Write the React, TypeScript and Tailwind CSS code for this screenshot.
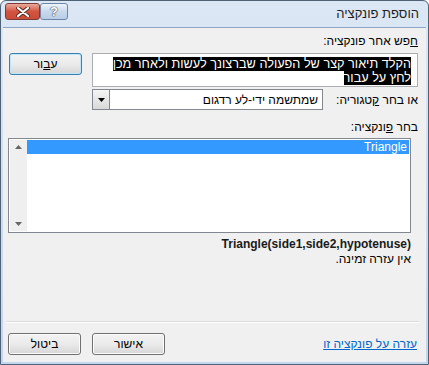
import React from 'react';

const font = { fontFamily: '"Liberation Sans", "DejaVu Sans", sans-serif' };

// Vista-style push button
const PushButton: React.FC<{ children: React.ReactNode; focused?: boolean }> = ({ children, focused }) => (
  <div
    className={`w-[73px] h-[22px] rounded-[3px] border flex items-center justify-center text-[12px] text-black bg-gradient-to-b from-[#f2f2f2] via-[#ebebeb] to-[#d6d6d6] ${
      focused ? 'border-[#3c7fb1] shadow-[inset_0_0_0_1px_#bfe6fb]' : 'border-[#707070] shadow-[inset_0_0_0_1px_#fcfcfc]'
    }`}
  >
    {children}
  </div>
);

const Arrow: React.FC<{ up?: boolean; color?: string }> = ({ up, color = '#555' }) => (
  <svg width="7" height="4" viewBox="0 0 7 4">
    {up ? <path d="M0 4 L3.5 0 L7 4 Z" fill={color} /> : <path d="M0 0 L7 0 L3.5 4 Z" fill={color} />}
  </svg>
);

export default function App() {
  return (
    <div className="w-[429px] h-[365px] bg-white" style={font}>
      <div className="w-full h-full rounded-t-[6px] border border-[#4f6276] bg-gradient-to-b from-[#dce7f5] to-[#c4d6ed] flex flex-col">
        {/* title bar */}
        <div className="h-[26px] flex items-center justify-between pl-[4px] pr-[9px]" dir="ltr">
          <div className="flex self-start mt-[2px]">
            <div className="w-[35px] h-[17px] rounded-[3px] border border-[#7a3b37] bg-gradient-to-b from-[#e9a99b] via-[#d2533f] to-[#c84e39] flex items-center justify-center">
              <svg width="14" height="10" viewBox="0 0 14 10">
                <path d="M2 1 L12 9 M12 1 L2 9" stroke="#5b2a24" strokeWidth="4" strokeLinecap="round" />
                <path d="M2 1 L12 9 M12 1 L2 9" stroke="#ffffff" strokeWidth="2.2" strokeLinecap="round" />
              </svg>
            </div>
            <div className="w-[28px] h-[17px] rounded-[3px] border border-[#6d86a6] bg-gradient-to-b from-[#eef4fb] via-[#c9d9ec] to-[#b9cde6] flex items-center justify-center text-[13px] font-bold text-white [text-shadow:0_0_1px_#3a4c66,0_0_1px_#3a4c66,0_0_1px_#3a4c66]">
              ?
            </div>
          </div>
          <div className="text-[13px] text-[#1e1e1e]" dir="rtl">הוספת פונקציה</div>
        </div>

        {/* client area */}
        <div
          className="flex-1 mx-[2px] mb-[2px] border-t border-[#8ea6c4] bg-[#f0f0f0] flex flex-col pr-[8px] pl-[5px] text-[12px] text-black"
          dir="rtl"
        >
          <div className="mt-[6px] h-[14px] leading-[14px]">
            <span className="underline">ח</span>פש אחר פונקציה:
          </div>

          <div className="mt-[5px] flex items-start gap-[10px]">
            <div className="w-[326px] h-[34px] bg-white border border-[#abadb3] pr-[6px] pt-[3px] leading-[14px] text-[12.7px]">
              <span className="bg-black text-white">הקלד תיאור קצר של הפעולה שברצונך לעשות ולאחר מכן</span>
              <br />
              <span className="bg-black text-white">לחץ על עבור</span>
            </div>
            <PushButton focused>
              ע<span className="underline">ב</span>ור
            </PushButton>
          </div>

          <div className="mt-[2px] flex items-center gap-[7px]">
            <div className="w-[88px] text-right">
              או בחר <span className="underline">ק</span>טגוריה:
            </div>
            <div className="w-[231px] h-[21px] bg-white border border-[#828790] flex items-center" dir="ltr">
              <div className="w-[17px] h-full border-r border-[#828790] bg-gradient-to-b from-[#f4f4f4] to-[#d9d9d9] flex items-center justify-center">
                <Arrow color="#000" />
              </div>
              <div className="flex-1 text-right pr-[4px]" dir="rtl">
                שמתשמה ידי-לע רדגום
              </div>
            </div>
          </div>

          <div className="mt-[10px] h-[14px] leading-[14px]">
            בחר <span className="underline">פ</span>ונקציה:
          </div>

          <div className="mt-[4px] mr-[7px] w-[403px] h-[95px] bg-white border border-[#828790] flex p-[1px]" dir="ltr">
            <div className="w-[17px] h-full bg-[#efefef] flex flex-col items-center justify-between py-[5px]">
              <Arrow up color="#666" />
              <Arrow color="#666" />
            </div>
            <div className="flex-1">
              <div className="h-[14px] bg-[#3399ff] text-white text-right pr-[2px] leading-[14px]">Triangle</div>
            </div>
          </div>

          <div className="mt-[4px] mr-[7px] font-bold text-[#1a1a1a] text-right leading-[15px]" dir="ltr">
            Triangle(side1,side2,hypotenuse)
          </div>
          <div className="mr-[7px] leading-[15px]">אין עזרה זמינה.</div>

          <div className="flex-1" />

          <div className="-ml-[1px] -mr-[1px] h-[1px] bg-[#dadada] border-b border-white box-content" />

          <div className="mt-[10px] mb-[7px] flex items-center justify-between">
            <a className="text-[#0066cc] underline pr-[1px]">עזרה על פונקציה זו</a>
            <div className="flex gap-[11px]">
              <PushButton>אישור</PushButton>
              <PushButton>ביטול</PushButton>
            </div>
          </div>
        </div>
      </div>
    </div>
  );
}
